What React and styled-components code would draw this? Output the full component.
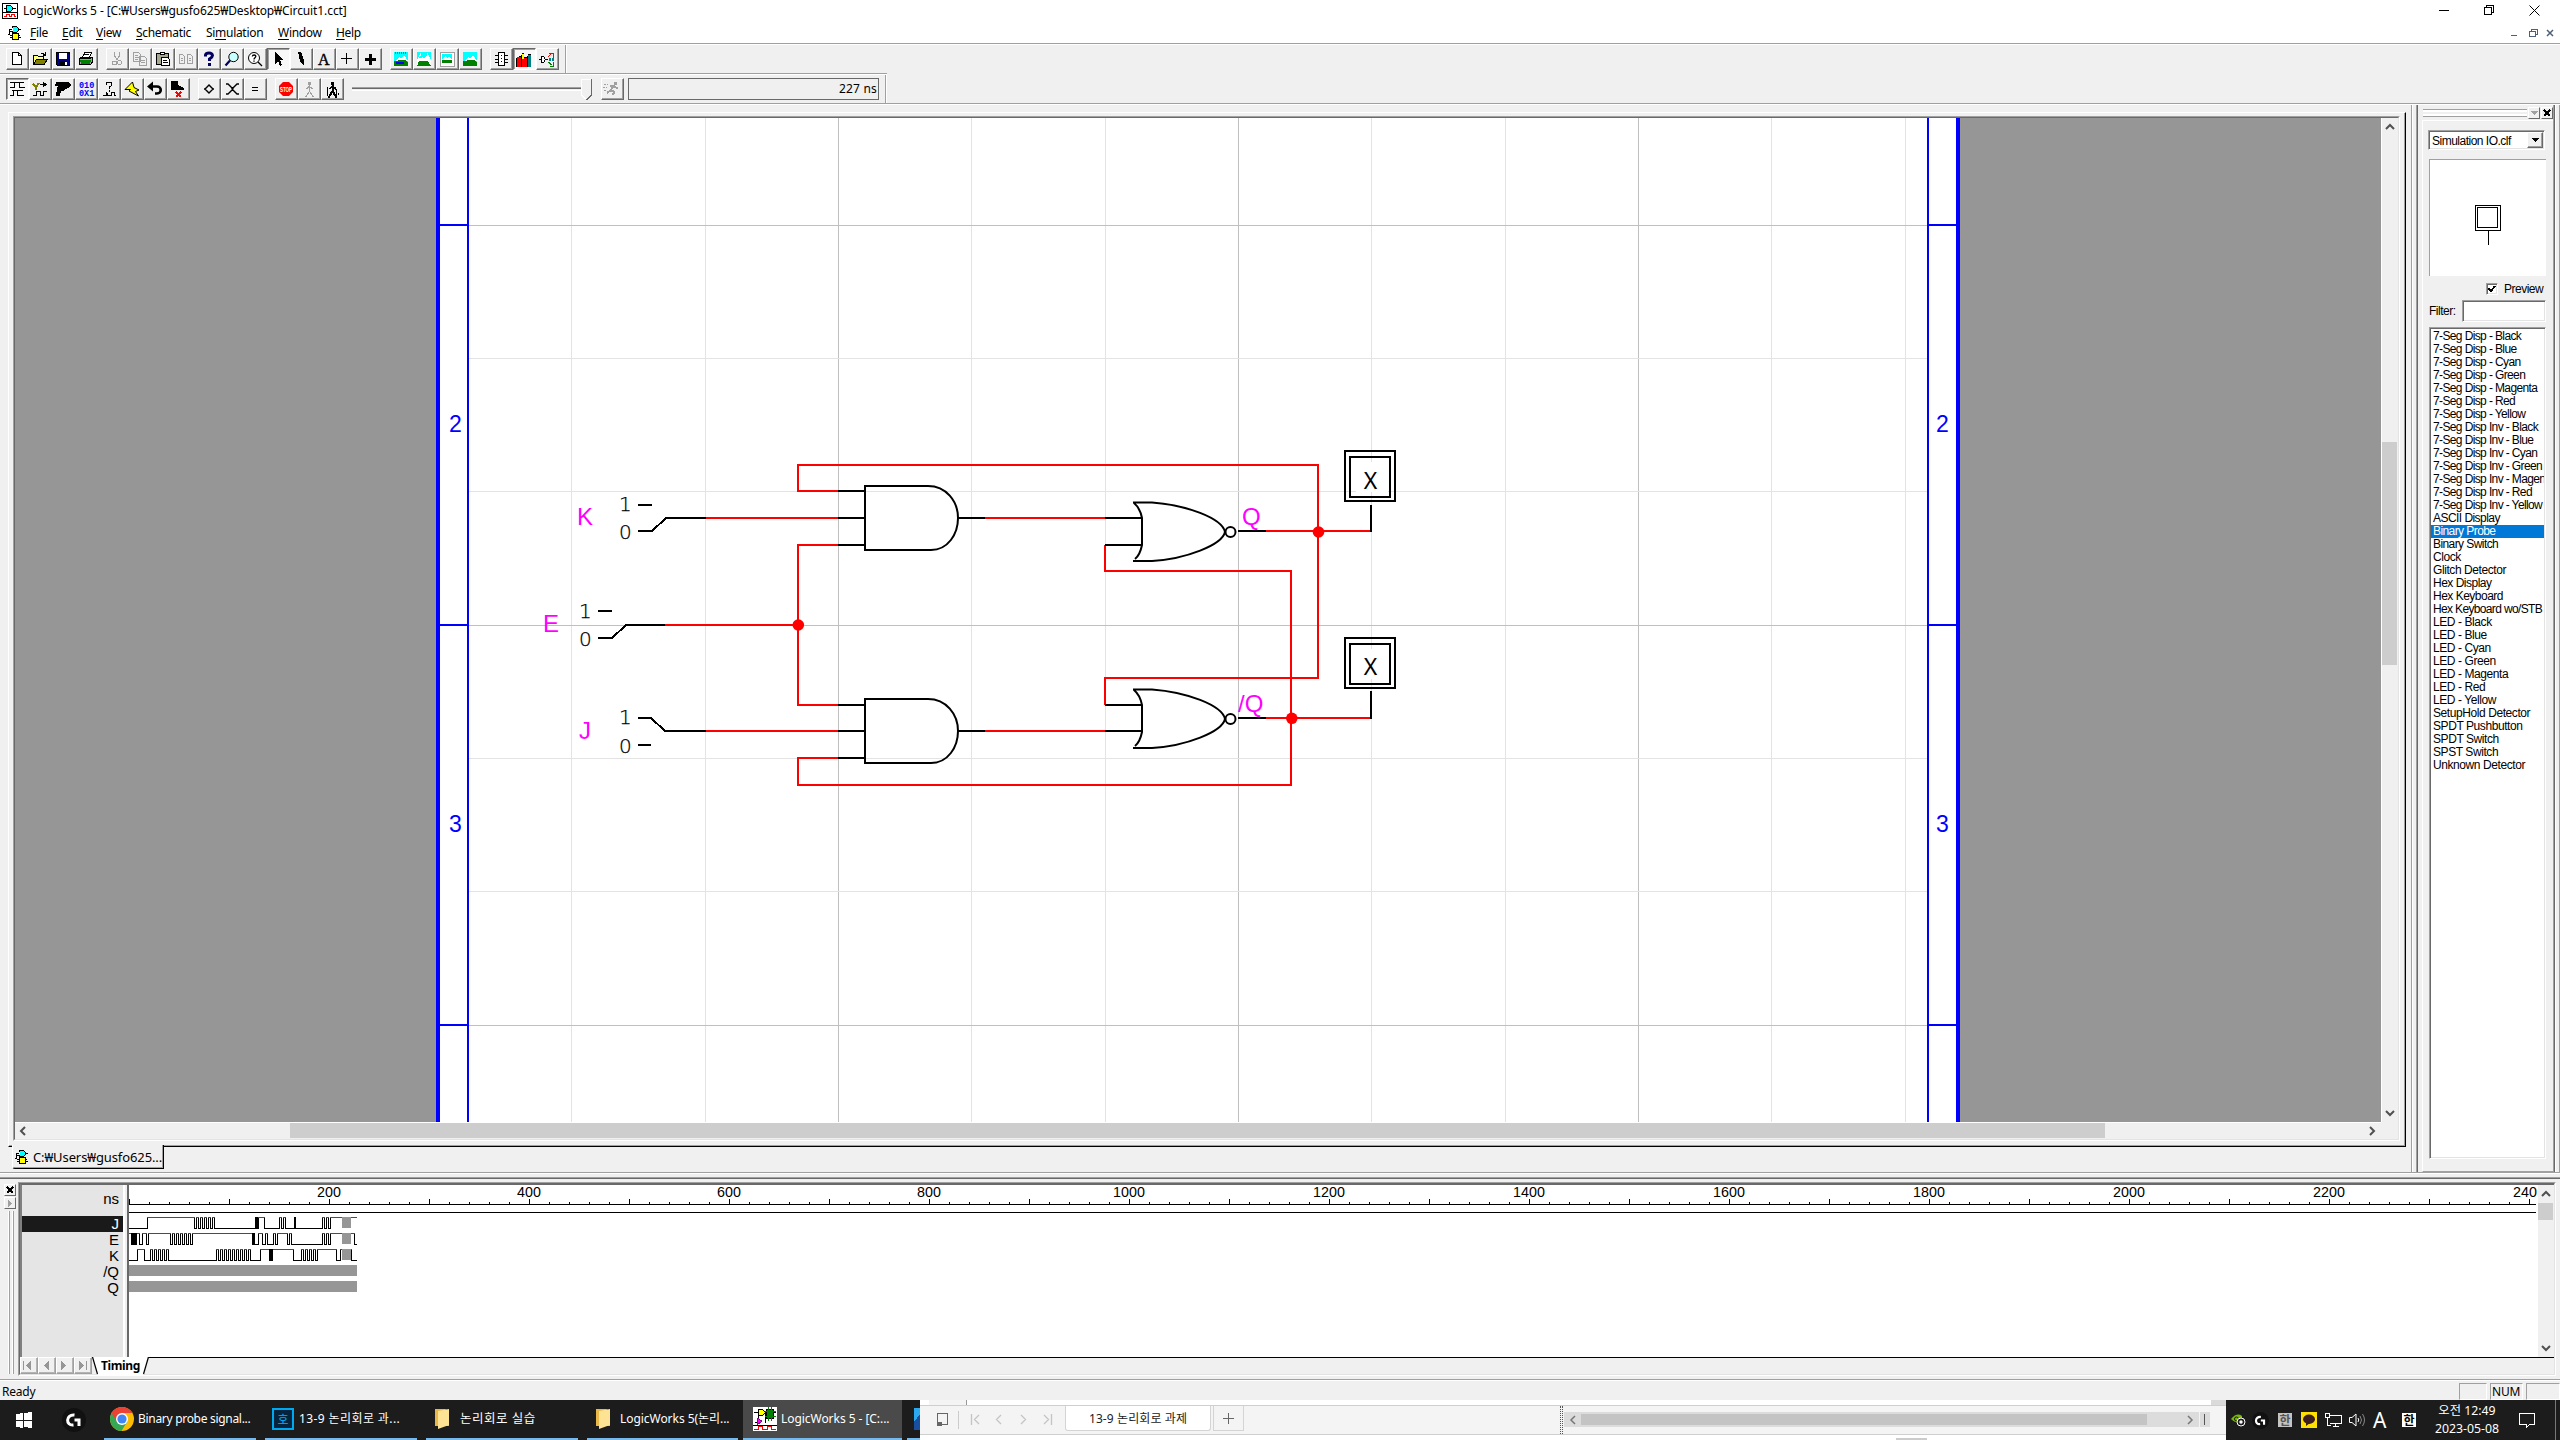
import React from 'react';
import styled, { createGlobalStyle, css } from 'styled-components';

const UI = `"Noto Sans", "Noto Sans CJK KR", sans-serif`;
const GULIM = `"Liberation Sans", "Noto Sans CJK KR", sans-serif`;

const Global = createGlobalStyle`
  *{box-sizing:border-box}
  html,body{margin:0;padding:0;background:#f0f0f0;overflow:hidden}
  svg{display:block;flex:none}
`;

const Screen = styled.div`
  width:2560px;height:1440px;display:flex;flex-direction:column;
  background:#f0f0f0;color:#000;font:12px/16px ${UI};overflow:hidden;white-space:nowrap;
`;
const T = styled.span`
  letter-spacing:${p => p.$ls || 0}px;
  font-size:${p => p.$s || 12}px;
`;

/* ---------- title and menu ---------- */
const TitleBar = styled.header`
  height:23px;flex:none;background:#fff;display:flex;align-items:center;padding:0 20px 2px 2px;
`;
const TitleText = styled(T)`margin-left:5px;flex:1;`;
const WinControls = styled.div`display:flex;gap:34px;align-items:center;`;
const MenuBar = styled.nav`
  height:20px;flex:none;background:#fff;display:flex;align-items:center;padding:0 1px 0 8px;
`;
const MenuItems = styled.div`display:flex;flex:1;margin-left:8px;gap:14px;`;
const MenuItem = styled.span`
  width:${p => p.$w}px;letter-spacing:${p => p.$ls}px;font-size:12px;
  u{text-underline-offset:2px;text-decoration-thickness:1px}
`;
const ChildControls = styled.div`display:flex;`;

/* ---------- toolbars ---------- */
const Toolbar = styled.div`
  height:30px;flex:none;width:${p => p.$w}px;border-top:1px solid #a0a0a0;box-shadow:inset 0 1px #fff;
  display:flex;align-items:flex-start;padding:4px 0 0 6px;gap:8px;
`;
const Group = styled.div`display:flex;`;
const ToolButton = styled.div`
  width:23px;height:22px;display:flex;align-items:center;justify-content:center;padding:0 ${p => p.$pad ?? 1}px 1px 0;
  border:1px solid;border-color:#fff #696969 #696969 #fff;box-shadow:inset -1px -1px #a0a0a0;
  ${p => p.$on && css`background:#f8f8f8;border-color:#696969 #fff #fff #696969;box-shadow:inset 1px 1px #a0a0a0;`}
  svg{overflow:visible}
`;
const ToolbarEnd = styled.div`width:2px;height:28px;border-left:1px solid #a0a0a0;border-right:1px solid #fff;margin:${p => p.$m};`;
const Slider = styled.div`display:flex;align-items:center;width:241px;height:22px;`;
const Track = styled.div`flex:1;height:4px;border-top:1px solid #a0a0a0;border-bottom:1px solid #fff;background:linear-gradient(#696969 1px,#f0f0f0 1px);`;
const TimeField = styled.div`
  width:251px;height:22px;border:1px solid #696969;text-align:right;padding:2px 1px 0 0;
  font:12px/16px ${UI};margin-left:-4px;letter-spacing:.2px;
`;
const Rule = styled.div`height:2px;flex:none;border-top:1px solid #a0a0a0;background:#fff;`;

/* ---------- main area ---------- */
const Main = styled.main`height:1067px;flex:none;display:flex;`;
const Mdi = styled.section`width:2411px;padding:7px 0 0 8px;`;
const Raised = styled.div`
  width:2398px;height:1035px;border-top:1px solid #fff;border-left:1px solid #fff;
  border-right:1px solid #000;border-bottom:1px solid #000;box-shadow:inset -1px -1px #a0a0a0;
  padding:3px 5px 5px 4px;
`;
const Sunken = styled.div`
  height:100%;border:1px solid;border-color:#a0a0a0 #fff #fff #a0a0a0;
`;
const SunkenInner = styled.div`
  height:100%;border:1px solid;border-color:#696969 #e3e3e3 #e3e3e3 #696969;
  display:grid;grid-template-columns:2366px 17px;grid-template-rows:1004px 17px;
`;
const VBar = styled.div`
  background:#f0f0f0;display:flex;flex-direction:column;align-items:center;padding:5px 1px 5px 0;
  border-left:1px solid #fff;
`;
const HBar = styled.div`
  background:#f0f0f0;display:flex;align-items:center;padding:0 5px 1px 4px;border-top:1px solid #fff;
`;
const VThumb = styled.div`width:15px;height:${p => p.$h}px;margin:${p => p.$t}px 0 auto;background:#cdcdcd;`;
const HThumb = styled.div`height:15px;width:${p => p.$w}px;margin:0 auto 0 ${p => p.$l}px;background:#cdcdcd;`;
const DocTab = styled.div`
  position:relative;width:152px;height:24px;margin:-2px 0 0 4px;background:#f0f0f0;
  border-left:1px solid #fff;border-right:1px solid #000;border-bottom:1px solid #000;
  box-shadow:inset -1px -1px #a0a0a0;border-radius:0 0 0 3px;display:flex;align-items:center;padding:0 0 0 2px;
`;
const DocTitle = styled(T)`margin-left:4px;`;

/* ---------- parts dock ---------- */
const Dock = styled.aside`
  width:149px;display:flex;border-left:1px solid #a0a0a0;box-shadow:inset 1px 0 #fff;padding-left:4px;
`;
const DockBody = styled.div`
  width:139px;border-left:1px solid #a0a0a0;border-right:1px solid #696969;
  box-shadow:inset 1px 0 #696969,inset -1px 0 #a0a0a0;padding:1px 1px 0 6px;
`;
const DockEdge = styled.div`width:5px;border-right:1px solid #a0a0a0;border-left:1px solid #fff;`;
const DockHead = styled.div`height:14px;display:flex;align-items:center;gap:1px;`;
const Grip = styled.div`
  flex:1;height:8px;border-top:1px solid #a0a0a0;border-bottom:1px solid #a0a0a0;
  background:linear-gradient(#fff 2px,#f0f0f0 2px,#f0f0f0 4px,#fff 4px);
`;
const TinyButton = styled.div`
  width:12px;height:12px;flex:none;border:1px solid;border-color:#fff #696969 #696969 #fff;
  display:flex;align-items:center;justify-content:center;
`;
const DockPane = styled.div`
  height:1052px;border-top:1px solid #fff;border-left:1px solid #fff;border-bottom:1px solid #a0a0a0;
  padding:9px 0 0 5px;margin-left:-1px;
`;
const field = css`border:1px solid;border-color:#a0a0a0 #fff #fff #a0a0a0;box-shadow:inset 1px 1px #696969,inset -1px -1px #e3e3e3;background:#fff;`;
const Combo = styled.div`${field}width:117px;height:20px;display:flex;align-items:center;padding:1px 1px 1px 3px;font:12px/16px ${GULIM};`;
const ComboText = styled.span`flex:1;letter-spacing:-.5px;padding-top:1px;`;
const ComboButton = styled.div`
  width:16px;height:16px;background:#f0f0f0;border:1px solid;border-color:#fff #696969 #696969 #fff;
  box-shadow:inset -1px -1px #a0a0a0;display:flex;align-items:center;justify-content:center;
`;
const Preview = styled.div`
  width:117px;height:117px;margin:9px 0 0 1px;background:#fff;border-top:1px solid #a0a0a0;border-left:1px solid #a0a0a0;
  padding:45px 0 0 45px;
`;
const CheckRow = styled.div`display:flex;align-items:center;height:14px;margin-top:6px;padding-left:58px;font:12px/14px ${GULIM};letter-spacing:-.5px;gap:6px;`;
const Check = styled.div`${field}width:12px;height:12px;display:flex;align-items:center;justify-content:center;`;
const FilterRow = styled.div`display:flex;align-items:center;justify-content:space-between;width:118px;height:22px;margin-top:4px;padding-left:1px;font:12px/14px ${GULIM};letter-spacing:-.5px;`;
const FilterInput = styled.div`${field}width:84px;height:22px;`;
const List = styled.div`${field}width:117px;height:832px;margin:5px 0 0 1px;padding:2px 1px 1px;overflow:hidden;`;
const ListItem = styled.div`
  height:13px;font:12px/13px ${GULIM};letter-spacing:${p => p.$ls}px;padding-left:2px;overflow:hidden;
  ${p => p.$sel && css`background:#0078d7;color:#fff;`}
`;

/* ---------- timing ---------- */
const Timing = styled.section`height:207px;flex:none;border-top:1px solid #a0a0a0;box-shadow:inset 0 1px #fff;padding-top:4px;`;
const TimingTop = styled.div`height:2px;background:linear-gradient(#a0a0a0 1px,#696969 1px);`;
const TimingRow = styled.div`display:flex;height:197px;padding-top:3px;`;
const Side = styled.div`width:18px;padding:2px 0 0 4px;display:flex;flex-direction:column;gap:1px;`;
const SideGrip = styled.div`
  width:6px;height:163px;margin:1px 0 0 4px;border-left:1px solid #fff;border-right:1px solid #a0a0a0;
  background:linear-gradient(90deg,#a0a0a0 1px,#f0f0f0 1px,#f0f0f0 3px,#fff 3px);
`;
const TimingFrame = styled.div`
  width:2538px;height:194px;border:1px solid;border-color:#a0a0a0 #fff #fff #a0a0a0;
`;
const TimingInner = styled.div`
  height:100%;border:1px solid;border-color:#696969 #e3e3e3 #e3e3e3 #696969;
  display:grid;grid-template-rows:173px 1fr;
`;
const TimingPanes = styled.div`display:flex;border-top:1px solid #696969;border-left:2px solid #808080;`;
const Names = styled.div`width:101px;background:#e5e5e5;font:14px/16px "Liberation Sans",sans-serif;text-align:right;`;
const Unit = styled.div`height:31px;padding:6px 4px 0 0;font-size:15px;`;
const Name = styled.div`height:16px;line-height:15px;padding-right:4px;font-size:15px;${p => p.$sel && css`background:#1a1a1a;color:#fff;`}`;
const Splitter = styled.div`width:6px;background:linear-gradient(90deg,#fff 2px,#f0f0f0 2px,#f0f0f0 4px,#696969 4px);`;
const Waves = styled.div`flex:1;background:#fff;`;
const TabsRow = styled.div`display:flex;align-items:flex-start;`;
const NavButton = styled.div`
  width:18px;height:17px;border:1px solid;border-color:#fff #a0a0a0 #a0a0a0 #fff;box-shadow:inset -1px -1px #b4b4b4;
  display:flex;align-items:center;justify-content:center;padding-right:2px;
`;
const ActiveTab = styled.div`display:flex;height:18px;`;
const TabLabel = styled.div`
  width:45px;height:18px;background:#fff;font:bold 12px/18px ${UI};text-align:center;letter-spacing:-.4px;
`;
const TabLine = styled.div`flex:1;height:1px;background:#000;`;

/* ---------- status ---------- */
const Status = styled.footer`height:21px;flex:none;border-top:1px solid #a0a0a0;box-shadow:inset 0 1px #fff;display:flex;align-items:center;padding:3px 0 0 2px;`;
const StatusText = styled(T)`flex:1;`;
const Cell = styled.div`
  width:${p => p.$w}px;height:17px;margin-left:3px;border:1px solid;border-color:#a0a0a0 #fff #fff #a0a0a0;
  padding-left:1px;line-height:16px;letter-spacing:-.2px;
`;

/* ---------- taskbar ---------- */
const Taskbar = styled.div`height:40px;flex:none;background:#1c1c1c;display:flex;color:#fff;overflow:hidden;`;
const Launch = styled.div`width:${p => p.$w}px;height:40px;padding-left:${p => p.$l}px;display:flex;align-items:center;`;
const Task = styled.div`
  width:${p => p.$w || 152}px;margin-right:${p => p.$mr ?? 9}px;height:40px;padding:0 0 0 ${p => p.$l}px;
  display:flex;align-items:center;gap:${p => p.$g}px;border-bottom:2px solid #76b9ed;background:${p => (p.$on ? '#4a4a4a' : 'transparent')};
  overflow:hidden;
`;
const Sheet = styled.div`width:1306px;height:40px;background:#fff;color:#333;display:flex;flex-direction:column;`;
const SheetTop = styled.div`height:5px;display:flex;justify-content:space-between;`;
const SheetHead = styled.div`width:38px;margin-left:9px;height:5px;background:#f4f4f4;border-right:1px solid #999;`;
const SheetCorner = styled.div`width:15px;height:5px;background:#dadada;`;
const SheetBar = styled.div`height:30px;background:#f4f4f4;border-top:1px solid #cfcfcf;border-bottom:1px solid #cfcfcf;display:flex;align-items:flex-start;`;
const SheetNav = styled.div`width:145px;height:28px;display:flex;align-items:center;`;
const SheetTab = styled.div`
  width:146px;height:25px;background:#fff;border:1px solid #d4d4d4;border-top:0;border-radius:0 0 3px 3px;
  text-align:center;line-height:26px;font-size:12px;letter-spacing:.1px;color:#222;
`;
const SheetAdd = styled.div`width:31px;height:25px;margin-left:2px;border:1px solid #d4d4d4;border-top:0;display:flex;align-items:center;justify-content:center;`;
const SheetSplit = styled.div`width:3px;height:28px;margin-left:316px;border-left:1px dotted #555;border-right:1px dotted #555;`;
const SheetScroll = styled.div`width:635px;height:15px;margin:6px 1px 0 1px;background:#dcdcdc;display:flex;align-items:center;padding:0 5px;justify-content:space-between;`;
const SheetThumb = styled.div`width:566px;height:11px;margin-right:auto;margin-left:4px;background:#c4c4c4;`;
const SheetGrab = styled.div`width:10px;height:15px;margin-top:6px;background:#dcdcdc;padding:2px 0 0 4px;`;
const SheetFoot = styled.div`width:31px;height:2px;margin:3px 0 0 976px;background:#ccc;`;
const Tray = styled.div`flex:1;display:flex;align-items:center;padding-left:5px;`;
const TrayItem = styled.div`width:${p => p.$w}px;display:flex;flex:none;`;
const Ime = styled.div`
  width:14px;height:14px;font:bold 12px/13px "Noto Sans CJK KR",sans-serif;text-align:center;
  background:${p => p.$bg};color:${p => p.$c};
`;
const Letter = styled.div`font:21px/22px ${UI};margin:-1px 0 0 -1px;`;
const Clock = styled.div`width:84px;text-align:center;font:12.3px/18px ${UI};`;
const ShowDesktop = styled.div`width:5px;height:40px;margin-left:auto;border-left:1px solid #777;`;

/* ---------- icons ---------- */
const I = ({ w = 16, h = 16, vb, children, smooth }) => (
  <svg width={w} height={h} viewBox={vb || `0 0 ${w} ${h}`} fill="none" stroke="#000"
    shapeRendering={smooth ? 'auto' : 'crispEdges'}>{children}</svg>
);
const Chevron = ({ d, c = '#505050', s = 2 }) => {
  const p = { up: 'M1 6L5 2L9 6', down: 'M1 2L5 6L9 2', left: 'M6 1L2 5L6 9', right: 'M2 1L6 5L2 9' }[d];
  const v = d === 'up' || d === 'down';
  return <I smooth w={v ? 10 : 8} h={v ? 8 : 10}><path d={p} stroke={c} strokeWidth={s} /></I>;
};

const GateIcon = () => (
  <I w={14} h={14}>
    <path d="M5 1h4v1h1v3h-1v1h-4z" fill="#00ffff" stroke="none" />
    <path d="M4 .5h5M4 6.500h5M9 1.500h1M9 5.500h1M11 3.500h2M10.500 2v3M4.500 1v1M4.500 5v1" />
    <path d="M5 8h5v5h-5z" fill="#ffff00" stroke="none" />
    <path d="M4.500 7v7M4 7.500h7M4 13.500h7M10.500 7v7M11 11.500h2M11 9.500h1M1 3.500h3M0 8.500h2M2 5.500h2M1.500 4v4M2 11.500h2M2 9.500h2" />
  </I>
);
const AppIcon = () => (
  <I w={16} h={16}>
    <path d="M.5.5h15v15H.5z" fill="#fff" /><path d="M1 9.500h14" />
    <path d="M2 5.500h3M11 5.500h3" /><path d="M5 3h4l2 1v3l-2 1h-4z" fill="#00ffff" stroke="none" /><path d="M4.500 2v7M5 2.500h4M5 8.500h4M9.500 3v1M10.500 4v3M9.500 7v1" />
    <path d="M2 13.500h2v-2h3v2h2v-2h3v2h2" stroke="#f00" />
  </I>
);

const NewI = () => <I><path d="M3.500 1.500h6l3 3v9h-9zM9.500 1.500v3h3" fill="#fff" /></I>;
const OpenI = () => <I><path d="M1.500 13.500v-9h4l1 1h5v3" fill="#ffff80" /><path d="M1.500 13.500l3-5h11l-3.500 5z" fill="#808000" /><path d="M9 2.500h2l2 1.500M13.500 1v3.500h-3" /></I>;
const SaveI = () => <I><path d="M1.500 1.500h13v13h-12l-1-1z" fill="#000080" /><path d="M4 2h8v6H4z" fill="#fff" stroke="none" /><path d="M4.500 10.500h7v4h-7z" fill="#000" /><path d="M10 11h1.500v3H10z" fill="#fff" stroke="none" /></I>;
const PrintI = () => <I><path d="M4.500 6.500l2-5h7l-2 5z" fill="#fff" /><path d="M1.500 7.500l2-1.500h11v5l-2 2.500h-11z" fill="#a0a0a0" /><path d="M2 9.500h11M3 12h9" stroke="#008000" strokeWidth="2" /><path d="M1.500 13.500h11M1.500 8v5.500M6 3.500h5M1 7.500h12" /></I>;
const CutI = () => <I><path d="M5.500 1v4l3 4M10.500 1v4l-3 4" stroke="#a0a0a0" /><circle cx="5.500" cy="12" r="2" stroke="#a0a0a0" /><circle cx="10.500" cy="11.500" r="2" stroke="#a0a0a0" /></I>;
const CopyI = () => <I><path d="M1.500 1.500h5l2 2v7h-7zM7.500 5.500h5l2 2v7h-7zM3 4.500h3M3 6.500h4M3 8.500h3M9 9.500h4M9 11.500h4" stroke="#a0a0a0" /></I>;
const PasteI = () => <I><path d="M1.500 2.500h12v11h-12z" fill="#a8a890" /><path d="M5 3.500V1.500h4v2z" fill="#fff" /><path d="M6.500 6.500h6l2 2v6h-8z" fill="#fff" /><path d="M8 9.500h4M8 11.500h5" /></I>;
const BookI = () => <I><path d="M1.500 3.500h3l2 2v7h-5zM9.500 3.500h3l2 2v7h-5zM3 7.500h2M3 9.500h2M11 7.500h2M11 9.500h2" stroke="#a0a0a0" /></I>;
const HelpI = () => <I smooth><path d="M4.500 5.500V4Q5 2 8 2T11.500 4.500Q11.500 6 8.500 8V10M8.500 12v3" stroke="#000060" strokeWidth="3" /></I>;
const LensI = () => <I smooth><circle cx="9.500" cy="6" r="4.700" fill="#c8ffff" /><path d="M6 9.500L1.500 14.500" stroke="#000060" strokeWidth="2.200" /></I>;
const LensQI = () => <I smooth><circle cx="7" cy="7" r="5.500" fill="#fff" /><path d="M11 11l4 4M5.300 5.500C5.500 3.500 9 3.500 8.800 5.500C8.700 6.800 7 6.800 7 8.500M7 9.500v1.300" strokeWidth="1.300" /></I>;
const ArrowI = () => <I><path d="M5 1v12l3-3 2 5 2-1-2-5h4z" fill="#000" stroke="none" /></I>;
const PenI = () => <I><path d="M5 1h3l3 8v6l-4-5z" fill="#000" stroke="none" /></I>;
const AI = () => <I><text x="2" y="14" fontFamily="Liberation Serif, serif" fontSize="16" fill="#000" stroke="#000" strokeWidth=".4">A</text></I>;
const PlusI = () => <I><path d="M7.500 2v11M2 7.500h11" /></I>;
const BoldPlusI = () => <I><path d="M8 3v11M3 8.500h11" strokeWidth="3" /></I>;
const Scene = ({ k }) => (
  <I>
    <path d="M1 1h14v14H1z" fill={k === 2 ? '#fff' : '#00ffff'} stroke={k === 2 ? '#a0a0a0' : 'none'} />
    {k === 2 && <path d="M3 3h10v6H3z" fill="#00ffff" stroke="none" />}
    {k === 1 && <path d="M1 15V9L5 1h6l4 8v6z" fill="#fff" stroke="none" />}
    {k === 1 && <path d="M5 1h6v3l2 3H3l2-3z" fill="#00ffff" stroke="none" />}
    <path d={k === 2 ? 'M3 9l3-4 2 2 2-2 3 4z' : 'M2 10l4-4 2 2 3-4 4 6z'} fill="#fff" stroke="none" />
    <path d={k === 2 ? 'M3 9h10v3H3z' : k === 1 ? 'M3 10h9l3 5H1z' : 'M1 10h3l1-1h7l3 2v4H1z'} fill="#008000" stroke="none" />
    {k === 0 && <path d="M3 12h8" stroke="#0000ff" strokeWidth="2" />}
    {k === 0 && <path d="M2 2h12" stroke="#408080" strokeDasharray="1 1" strokeWidth="2" />}
  </I>
);
const ChipI = () => <I><path d="M5.500 1.500h6v13h-6z" fill="#fff" /><path d="M2 4.500h3M2 8h3M2 11.500h3M12 4.500h3M12 8h3M12 11.500h3M7 1.500h3" /><path d="M8.500 4v8" strokeDasharray="1 2" /></I>;
const BooksI = () => <I><path d="M1 6h4v10h-4zM8 7h3v9h-3z" fill="#ff0000" stroke="none" /><path d="M6 3h2v5h-2z" fill="#ffff00" stroke="none" /><path d="M6 8h2v8h-2z" fill="#ff0000" stroke="none" /><path d="M12 4h3v12h-3z" fill="#008080" stroke="none" /><path d="M.5 7v9M5.500 4v12M11.500 5v11M6 2.500h2M12 3.500h3M3 5.500h2M8 6.500h3" /></I>;
const NetI = () => <I><path d="M0 8.500h2M7 8.500h2" /><path d="M2.500 5.500h2l2 3-2 3h-2z" fill="#fff" /><path d="M9 6l4-4M10 2.500h4v4" stroke="#f00" /><path d="M10 8.500h5" stroke="#008080" strokeWidth="3" strokeDasharray="2 1" /><path d="M9 11l4 3M14.500 11v4h-4" stroke="#008000" /></I>;

const WaveI = () => <I><path d="M1 1.500h14M1 6.500h4v-5M10.500 1.500v5h5M3 9.500h5v5h7M1 14.500h3v-5M8 9.500h6" /></I>;
const PlugI = () => <I><path d="M1 3l3 3M7 2L4 6v3" stroke="#808000" strokeWidth="2" /><path d="M8 3.500h3M11.500 1v5M12 3.500h3M12 2.500h2M12 4.500h2M1 14.500h3v-4h4v4h3v-4h4" /></I>;
const GunI = () => <I><path d="M0 3h1V1h13l2 3-2 3-4 1-2 2H6l-1 5H1l1-7 1-3H0z" fill="#000" stroke="none" /></I>;
const BitsI = () => <I><g fill="#0000ff" stroke="none" fontFamily="Liberation Mono, monospace" fontSize="8.500" fontWeight="bold"><text x="1" y="7">010</text><text x="1" y="15">0X1</text></g></I>;
const QWaveI = () => <I><path d="M5.500 4V1.500h5v3L8.500 6v2M8.500 9v1.500M2 14.500h3v-3M5 11.500h1M6 14.500v-3M6 14.500h4v-3h3v3h2" /></I>;
const ZapI = () => <I smooth><path d="M8.500 1L1 8.500H6.500L5 10L14.500 15L11.500 10.500L15 9L10 6.500Z" fill="#ffff00" /></I>;
const UndoI = () => <I smooth><path d="M5 5.500h5c5 0 5 7 0 7H8" strokeWidth="2.600" /><path d="M0 5.500L6 .5v10z" fill="#000" stroke="none" /></I>;
const BootI = () => <I><path d="M1 0h7v4l6 3v2H1z" fill="#000" stroke="none" /><path d="M6 11l5 5M11 11l-5 5" stroke="#f00" strokeWidth="1.500" /></I>;
const DiamondI = () => <I smooth><path d="M3 8h1l4-4 4 4h1M4 8l4 4 4-4" strokeWidth="1.400" /></I>;
const CrossI = () => <I smooth><path d="M2 3h2l5 5-5 5H2M15 3h-2L8 8l5 5h2" strokeWidth="1.400" /></I>;
const EqI = () => <I><path d="M5 6.500h6M5 9.500h6" /></I>;
const StopI = () => <I smooth><path d="M5 1h6l4 4v6l-4 4H5l-4-4V5z" fill="#f00" stroke="none" /><text x="2" y="10.800" fontSize="7" fontWeight="bold" textLength="12" lengthAdjust="spacingAndGlyphs" fill="#fff" stroke="none" fontFamily="Liberation Sans, sans-serif">STOP</text></I>;
const Walker = ({ c, n }) => <I><path d="M7 1h3v3H7z" fill={c} stroke="none" /><path d="M8.500 4v6M8.500 5l-3 3M9 6l3 2M8.500 10l-3 5M8.500 10l3 5M4 15.500h2M11 15.500h2" stroke={c} strokeWidth={n ? 2 : 1} />{n && <path d="M3.500 6v9M14 12v2M12.500 8v7" />}</I>;
const RunI = () => <I><path d="M1 3.500h4M0 6.500h4M1 9.500h3" stroke="#a0a0a0" strokeDasharray="2 1" /><path d="M11 1h3v3h-3z" fill="#a0a0a0" stroke="none" /><path d="M11 4L8 9l3 2-1 3M8 9l-4 3M10 5L7 5M11 6l4 1" stroke="#a0a0a0" strokeWidth="2" /></I>;

/* ---------- schematic ---------- */
const RowMarks = [225, 625, 1025];
const Schematic = () => {
  const v = [571, 705, 838, 971, 1105, 1238, 1371, 1505, 1638, 1771, 1905];
  const h = [225, 358, 491, 625, 758, 891, 1025];
  return (
    <svg width="2366" height="1004" viewBox="15 118 2366 1004" fill="none" shapeRendering="crispEdges">
      <rect x="15" y="118" width="2366" height="1004" fill="#969696" />
      <rect x="437" y="118" width="1522" height="1004" fill="#fff" />
      {v.map((x, i) => <path key={x} d={`M${x + .5} 118V1122`} stroke={i % 3 === 2 ? '#c0c0c0' : '#e3e3e3'} />)}
      {h.map((y, i) => <path key={y} d={`M469 ${y + .5}H1928`} stroke={i % 3 === 0 ? '#c0c0c0' : '#e3e3e3'} />)}
      <g stroke="#0000ff" strokeWidth="2">
        <path d="M468 118V1122M1928 118V1122" />
        <path d="M438 118V1122M1958 118V1122" strokeWidth="4" />
        {RowMarks.map(y => <path key={y} d={`M438 ${y}H468M1928 ${y}H1958`} />)}
      </g>
      <g fill="#0000ff" fontFamily="Liberation Sans, sans-serif" fontSize="23" textAnchor="middle">
        <text x="455.500" y="432">2</text><text x="1942.500" y="432">2</text>
        <text x="455.500" y="832">3</text><text x="1942.500" y="832">3</text>
      </g>
      <g stroke="#ff0000" strokeWidth="2">
        <path d="M838 491H798V465H1318V678H1105V705" />
        <path d="M706 518H838M985 518H1105M838 545H798V705H838M665 625H798" />
        <path d="M706 731H838M985 731H1105M838 758H798V785H1291V571H1105V545" />
        <path d="M1266 531H1371M1266 718H1371" />
      </g>
      <g fill="#ff0000" shapeRendering="auto">
        <circle cx="798.300" cy="625" r="5.800" /><circle cx="1318.500" cy="532" r="5.800" /><circle cx="1291.800" cy="718.300" r="5.800" />
      </g>
      <g stroke="#000" strokeWidth="2">
        <path d="M638 505H652M638 531H652L666 518H706" />
        <path d="M598 611H612M598 638H612L626 625H665" />
        <path d="M638 745H651M638 718H651L665 731H706" />
        {[0, 213].map(o => (
          <g key={o} transform={`translate(0 ${o})`}>
            <path d={`M838 ${o ? 492 : 491}H865M838 518H865M838 545H865M958 518H985`} />
            <path shapeRendering="auto" d="M865 486H928C946 486 958 501 958 518C958 534 948 550 931 550H865Z" />
          </g>
        ))}
        {[0, 187].map(o => (
          <g key={o} transform={`translate(0 ${o})`}>
            <path d={`M1105 518H1142M1105 ${o ? 544 : 545}H1142M1238 531H1266M1371 ${o ? 504 : 505}V532`} />
            <path shapeRendering="auto" d="M1133 502.500H1152C1186 505 1222 518 1225 532C1222 545 1186 559 1152 561H1133M1134 503Q1140 508 1142 518V545Q1140 555 1135 559" />
            <circle shapeRendering="auto" cx="1230.500" cy="532" r="5" />
            <path d="M1345 451H1395V501H1345ZM1350 457H1390V497H1350Z" />
            <rect x="1356" y="462" width="32" height="30" fill="#fff" stroke="none" />
          </g>
        ))}
      </g>
      <g fill="#ff00ff" fontFamily="Liberation Sans, sans-serif" fontSize="24">
        <text x="577" y="525">K</text><text x="543" y="632">E</text><text x="579" y="739">J</text>
        <text x="1242" y="525">Q</text><text x="1238" y="712">/Q</text>
      </g>
      <g fill="#000" stroke="#000" strokeWidth=".25" fontFamily="DejaVu Sans, sans-serif" fontWeight="200" fontSize="20">
        <text x="619" y="511">1</text><text x="619" y="539">0</text>
        <text x="579" y="618">1</text><text x="579" y="646">0</text>
        <text x="619" y="724">1</text><text x="619" y="753">0</text>
      </g>
      <g fill="#000" fontFamily="Noto Sans, sans-serif" fontSize="23" textAnchor="middle">
        <text x="1370.500" y="489">X</text><text x="1370.500" y="675">X</text>
      </g>
    </svg>
  );
};

/* ---------- waveforms ---------- */
const pulses = (a, b) => Array.from({ length: (b - a) / 2 + 1 }, (_, i) => a + 2 * i);
const signals = [
  { y: 1217, start: 0, end: 356, t: [147, ...pulses(194, 214), 258, 264, ...pulses(279, 285), ...pulses(322, 330)], solid: [[255, 3], [294, 2]] },
  { y: 1233, start: 1, end: 356, t: [139, 142, 146, 148, ...pulses(170, 192), 252, 258, 262, 265, 267, 273, 275, 277, 287, 289, 291, ...pulses(322, 330), 354], solid: [[131, 6], [252, 3]] },
  { y: 1249, start: 0, end: 356, t: [137, 144, ...pulses(150, 168), ...pulses(216, 250), 260, 293, ...pulses(301, 317), 336, 340, 351], solid: [[269, 4]] },
];
const Wave = ({ s }) => {
  let x = 129, lv = s.start, hi = '', lo = '', ve = '';
  [...s.t, s.end].forEach((t, i, a) => {
    const y = s.y + (lv ? 0.5 : 11.5);
    if (lv) hi += `M${x} ${y}H${t + 1}`; else lo += `M${x} ${y}H${t + 1}`;
    if (i < a.length - 1) ve += `M${t + .5} ${s.y + 1}V${s.y + 12}`;
    x = t; lv = 1 - lv;
  });
  return (
    <g>
      <path d={lo + ve} stroke="#000" /><path d={hi} stroke="#ff0000" />
      {s.solid.map(([a, w]) => <rect key={a} x={a} y={s.y} width={w} height="12" fill="#000" />)}
      <rect x="342" y={s.y} width="9" height="11" fill="#969696" />
    </g>
  );
};
const WaveChart = () => (
  <svg width="2408" height="170" viewBox="129 1185 2408 170" fill="none" shapeRendering="crispEdges">
    <path d="M129 1204.500H2536M129 1212.500H2536" stroke="#000" />
    {Array.from({ length: 121 }, (_, i) => (
      <path key={i} d={`M${129.5 + i * 20} ${i % 5 ? 1202 : 1199}V1204`} stroke="#000" />
    ))}
    <g fill="#000" fontFamily="Liberation Sans, sans-serif" fontSize="14.300" textAnchor="middle">
      {Array.from({ length: 12 }, (_, i) => <text key={i} x={329 + i * 200} y="1197">{(i + 1) * 200}</text>)}
    </g>
    {signals.map(s => <Wave key={s.y} s={s} />)}
    <path d="M129 1265h228v11h-228zM129 1281h228v11h-228z" fill="#969696" />
  </svg>
);

/* ---------- taskbar icons ---------- */
const WinLogo = () => <I w={16} h={16}><path d="M0 2l7-1v7H0zM8 1l8-1v8H8zM0 9h7v7l-7-1zM8 9h8v7l-8-1z" fill="#fff" stroke="none" /></I>;
const GLogo = ({ s = 24 }) => <I smooth w={s} h={s} vb="0 0 24 24"><circle cx="12" cy="12" r="12" fill="#111" stroke="none" /><path d="M12.500 7C3.500 6 3.500 18 11.500 17M12.500 12H17V18" stroke="#fff" strokeWidth="3" /></I>;
const Chrome = () => (
  <I smooth w={24} h={24}><g stroke="none">
    <circle cx="12" cy="12" r="12" fill="#fbbc05" />
    <path d="M1.600 6A12 12 0 0 0 11.500 24L17 15 12 12z" fill="#34a853" />
    <path d="M1.600 6A12 12 0 0 1 22.400 6H12L7 15z" fill="#ea4335" />
    <circle cx="12" cy="12" r="6" fill="#fff" /><circle cx="12" cy="12" r="4.600" fill="#4285f4" />
  </g></I>
);
const HwpBox = styled.div`width:22px;height:22px;border:2px solid #00a8f0;background:#04233c;color:#00b4ff;font:12px/17px "Noto Sans CJK KR",sans-serif;text-align:center;`;
const Folder = () => <I smooth w={15} h={22}><g stroke="none"><path d="M0 1h10l4 2v15H0z" fill="#e8b84a" /><path d="M3 3l11-2v16l-11 4z" fill="#ffe394" /></g></I>;
const LwIcon = () => (
  <I w={24} h={24}><path d="M0 0h24v24H0z" fill="#fff" stroke="none" />
    <path d="M1 5.500h22M5.500 3v14M12.500 4v12M2 15.500h6" /><path d="M5.500 2.500h4l3 3-3 3h-4z" fill="#ff0" /><path d="M13.500 2.500h7v9h-7z" fill="#008000" /><path d="M12 4.500h11M12 9.500h11M15.500 0v14M18.500 0v14" stroke="#008000" />
    <path d="M4 11l5 3-5 4z" fill="#f0f" stroke="#808" /><path d="M0 18.500h24" /><path d="M1 22.500h4v-3h4v3h5v-3h4v3h5" stroke="#f00" /></I>
);

const parts = ['7-Seg Disp - Black', '7-Seg Disp - Blue', '7-Seg Disp - Cyan', '7-Seg Disp - Green', '7-Seg Disp - Magenta', '7-Seg Disp - Red', '7-Seg Disp - Yellow',
  '7-Seg Disp Inv - Black', '7-Seg Disp Inv - Blue', '7-Seg Disp Inv - Cyan', '7-Seg Disp Inv - Green', '7-Seg Disp Inv - Magenta', '7-Seg Disp Inv - Red', '7-Seg Disp Inv - Yellow',
  'ASCII Display', 'Binary Probe', 'Binary Switch', 'Clock', 'Glitch Detector', 'Hex Display', 'Hex Keyboard', 'Hex Keyboard wo/STB',
  'LED - Black', 'LED - Blue', 'LED - Cyan', 'LED - Green', 'LED - Magenta', 'LED - Red', 'LED - Yellow',
  'SetupHold Detector', 'SPDT Pushbutton', 'SPDT Switch', 'SPST Switch', 'Unknown Detector'];
const tightness = [['7-Seg', -0.62], ['Hex Keyboard wo', -0.65], ['Binary', -0.58], ['ASCII', -0.55], ['Hex', -0.5]];
const spacing = name => (tightness.find(([k]) => name.startsWith(k)) || [0, -0.42])[1];
const menus = [['', 'F', 'ile', 18], ['', 'E', 'dit', 20], ['', 'V', 'iew', 26], ['', 'S', 'chematic', 56], ['Si', 'm', 'ulation', 58], ['', 'W', 'indow', 44], ['', 'H', 'elp', 25]];
const Buttons = ({ items, on, pad }) => <Group>{items.map((Icon, i) => <ToolButton key={i} $pad={pad} $on={i === on}><Icon /></ToolButton>)}</Group>;
const scenes = [0, 1, 2, 3].map(k => () => <Scene k={k} />);
const Walking = () => <Walker c="#a0a0a0" />;
const Stepping = () => <Walker c="#000" n />;
const Tri = ({ d, bar, c = '#969696' }) => (
  <I w={10} h={9}><path d={d === 'l' ? 'M8 0v9L3 4.500z' : 'M2 0v9l5-4.500z'} fill={c} stroke="none" />{bar && <path d={d === 'l' ? 'M.5 0v9' : 'M9.500 0v9'} stroke={c} />}</I>
);
const XMark = () => <I w={8} h={8}><path d="M1 1l6 6M7 1L1 7" strokeWidth="1.800" /></I>;

export default function App() {
  return (
    <Screen>
      <Global />
      <TitleBar>
        <AppIcon />
        <TitleText $ls={-0.1}>LogicWorks 5 - [C:₩Users₩gusfo625₩Desktop₩Circuit1.cct]</TitleText>
        <WinControls>
          <I w={11} h={11}><path d="M0 5.500h10" /></I>
          <I w={11} h={11}><path d="M.5 2.500h7v7h-7zM2.500 2.500v-2h7v7h-2" /></I>
          <I w={11} h={11} smooth><path d="M.5.5l10 10M10.500.5l-10 10" /></I>
        </WinControls>
      </TitleBar>
      <MenuBar>
        <GateIcon />
        <MenuItems>
          {menus.map(([a, b, c, w]) => <MenuItem key={b + c} $w={w} $ls={-0.3}>{a}<u>{b}</u>{c}</MenuItem>)}
        </MenuItems>
        <ChildControls>
          <I w={18} h={14}><path d="M5 9.500h6" stroke="#4c607a" /></I>
          <I w={18} h={14}><path d="M5.500 5.500h6v5h-6zM7.500 5v-2h6v5h-2" stroke="#4c607a" /></I>
          <I w={17} h={14} smooth><path d="M5 4l6 6M11 4l-6 6" stroke="#4c607a" strokeWidth="1.500" /></I>
        </ChildControls>
      </MenuBar>
      <Toolbar $w={2560}>
        <Buttons items={[NewI, OpenI, SaveI, PrintI]} />
        <Buttons pad={2} on={7} items={[CutI, CopyI, PasteI, BookI, HelpI, LensI, LensQI, ArrowI, PenI, AI, PlusI, BoldPlusI]} />
        <Buttons pad={2} items={scenes} />
        <Buttons pad={2} on={1} items={[ChipI, BooksI, NetI]} />
        <ToolbarEnd $m="-3px 0 0 -2px" />
      </Toolbar>
      <Toolbar $w={887}>
        <Buttons on={0} items={[WaveI, PlugI, GunI, BitsI, QWaveI, ZapI, UndoI, BootI]} />
        <Buttons items={[DiamondI, CrossI, EqI]} />
        <Buttons items={[StopI, Walking, Stepping]} />
        <Slider>
          <Track />
          <I w={12} h={21}><path d="M.5 16V.5h10" stroke="#fff" /><path d="M10.500 0v16l-4 4h-2" stroke="#696969" /><path d="M.5 16l4 4" stroke="#fff" /></I>
        </Slider>
        <Group><ToolButton $pad={3}><RunI /></ToolButton></Group>
        <TimeField>227 ns</TimeField>
        <ToolbarEnd $m="-3px 0 0 -2px" />
      </Toolbar>
      <Rule />
      <Main>
        <Mdi>
          <Raised><Sunken><SunkenInner>
            <Schematic />
            <VBar><Chevron d="up" /><VThumb $h={223} $t={311} /><Chevron d="down" /></VBar>
            <HBar><Chevron d="left" /><HThumb $w={1815} $l={263} /><Chevron d="right" /></HBar>
            <div />
          </SunkenInner></Sunken></Raised>
          <DocTab><GateIcon /><DocTitle $s={13} $ls={-0.1}>C:₩Users₩gusfo625...</DocTitle></DocTab>
        </Mdi>
        <Dock>
          <DockBody>
            <DockHead>
              <Grip />
              <TinyButton><I w={7} h={4}><path d="M0 0h7L3.500 4z" fill="#a0a0a0" stroke="none" /></I></TinyButton>
              <TinyButton><XMark /></TinyButton>
            </DockHead>
            <DockPane>
              <Combo><ComboText>Simulation IO.clf</ComboText><ComboButton><I w={7} h={4}><path d="M0 0h7L3.500 4z" fill="#000" stroke="none" /></I></ComboButton></Combo>
              <Preview><I w={27} h={41}><path d="M.5.5h25v25H.5zM2.500 2.500h20v20h-20zM13.500 25v15" /></I></Preview>
              <CheckRow><Check><I w={8} h={8}><path d="M.5 3l2.500 3 4-5" strokeWidth="2" /></I></Check>Preview</CheckRow>
              <FilterRow>Filter:<FilterInput /></FilterRow>
              <List>{parts.map((p, i) => <ListItem key={p} $ls={spacing(p)} $sel={i === 15}>{p}</ListItem>)}</List>
            </DockPane>
          </DockBody>
          <DockEdge />
        </Dock>
      </Main>
      <Timing>
        <TimingTop />
        <TimingRow>
          <Side>
            <TinyButton><XMark /></TinyButton>
            <TinyButton><I w={4} h={7}><path d="M0 0v7l4-3.500z" fill="#a0a0a0" stroke="none" /></I></TinyButton>
            <SideGrip />
          </Side>
          <TimingFrame><TimingInner>
            <TimingPanes>
              <Names>
                <Unit>ns</Unit>
                {['J', 'E', 'K', '/Q', 'Q'].map((n, i) => <Name key={n} $sel={i === 0}>{n}</Name>)}
              </Names>
              <Splitter />
              <Waves><WaveChart /></Waves>
              <VBar><Chevron d="up" /><VThumb $h={17} $t={5} /><Chevron d="down" /></VBar>
            </TimingPanes>
            <TabsRow>
              <NavButton><Tri d="l" bar /></NavButton><NavButton><Tri d="l" /></NavButton>
              <NavButton><Tri d="r" /></NavButton><NavButton><Tri d="r" bar /></NavButton>
              <ActiveTab>
                <I smooth w={6} h={18}><path d="M0 0H6V18z" fill="#fff" stroke="none" /><path d="M.5 0L5.500 17" strokeWidth="1.300" /></I>
                <TabLabel>Timing</TabLabel>
                <I smooth w={6} h={18}><path d="M0 0H6L0 18z" fill="#fff" stroke="none" /><path d="M5.500 0L.5 17" strokeWidth="1.300" /></I>
              </ActiveTab>
              <TabLine />
            </TabsRow>
          </TimingInner></TimingFrame>
        </TimingRow>
      </Timing>
      <Status>
        <StatusText $ls={-0.2}>Ready</StatusText>
        <Cell $w={28} /><Cell $w={33}>NUM</Cell><Cell $w={34} />
      </Status>
      <Taskbar>
        <Launch $w={62} $l={16}><WinLogo /></Launch>
        <Launch $w={42} $l={0}><GLogo /></Launch>
        <Task $l={6} $g={4}><Chrome /><T $ls={-0.3}>Binary probe signal...</T></Task>
        <Task $l={7} $g={5}><HwpBox>호</HwpBox><T $ls={0.4}>13-9 논리회로 과...</T></Task>
        <Task $l={9} $g={10}><Folder /><T $s={12.5} $ls={0.5}>논리회로 실습</T></Task>
        <Task $l={9} $g={9} $w={151} $mr={5}><Folder /><T $ls={-0.05}>LogicWorks 5(논리...</T></Task>
        <Task $l={10} $g={4} $w={159} $mr={5} $on><LwIcon /><T $ls={-0.05}>LogicWorks 5 - [C:...</T></Task>
        <Task $l={7} $g={0} $w={13} $mr={0}><I w={6} h={22}><path d="M0 0h6v22H0z" fill="#1a4fa0" stroke="none" /><path d="M0 0h6v6l-6 8z" fill="#2aa8f0" stroke="none" /></I></Task>
        <Sheet>
          <SheetTop><SheetHead /><SheetCorner /></SheetTop>
          <SheetBar>
            <SheetNav>
              <I w={145} h={28}>
                <path d="M17.500 7.500h10v11h-10z" stroke="#666" /><path d="M17 16h5v4h-5z" fill="#666" stroke="none" />
                <path d="M38.500 5v18" stroke="#ccc" />
                <g stroke="#c4c4c4" shapeRendering="auto" strokeWidth="1.300">
                  <path d="M51.500 8v11M59 9l-4.500 4.500L59 18M81 9l-4.500 4.500L81 18M101 9l4.500 4.500L101 18M124 9l4.500 4.500L124 18M131.500 8v11" />
                </g>
              </I>
            </SheetNav>
            <SheetTab>13-9 논리회로 과제</SheetTab>
            <SheetAdd><I w={11} h={11}><path d="M5.500 0v11M0 5.500h11" stroke="#666" /></I></SheetAdd>
            <SheetSplit />
            <SheetScroll><Chevron d="left" c="#777" s={1.5} /><SheetThumb /><Chevron d="right" c="#777" s={1.5} /></SheetScroll>
            <SheetGrab><I w={1} h={11}><path d="M.5 0v11" stroke="#555" /></I></SheetGrab>
          </SheetBar>
          <SheetFoot />
        </Sheet>
        <Tray>
          <TrayItem $w={21}><I smooth w={15} h={14}><path d="M0 6Q6-1 11 3V9Q5 11 0 6z" fill="#76b900" stroke="none" /><circle cx="5.500" cy="6" r="2" stroke="#1c1c1c" /><circle cx="10" cy="9" r="4" fill="#1c1c1c" stroke="#fff" /><circle cx="10" cy="9" r="1.700" fill="#fff" stroke="none" /></I></TrayItem>
          <TrayItem $w={26}><GLogo s={17} /></TrayItem>
          <TrayItem $w={23}><Ime $bg="#c4c4c4" $c="#555">한</Ime></TrayItem>
          <TrayItem $w={24}><I smooth w={16} h={16}><path d="M0 0h16v16H0z" fill="#ffe000" stroke="none" /><ellipse cx="8" cy="7.300" rx="6" ry="4.700" fill="#3c1e1e" stroke="none" /><path d="M5 10v4l4-3z" fill="#3c1e1e" stroke="none" /></I></TrayItem>
          <TrayItem $w={24}><I w={17} h={14}><path d="M5 2.500h11.500v8H5M8 13.500h6M10.500 11v3M.5.5h4v4h-4zM2.500 5v7h3" stroke="#fff" /></I></TrayItem>
          <TrayItem $w={25}><I smooth w={17} h={14}><path d="M.5 4.500H3l4-3.500v12L3 9.500H.5z" stroke="#fff" /><path d="M9 5q1.500 2 0 4" stroke="#fff" /><path d="M11 3q3 4 0 8M13.500 1q4 6 0 12" stroke="#888" /></I></TrayItem>
          <TrayItem $w={28}><Letter>A</Letter></TrayItem>
          <TrayItem $w={23}><Ime $bg="#fff" $c="#000">한</Ime></TrayItem>
          <Clock>오전 12:49<br />2023-05-08</Clock>
          <TrayItem $w={26}><I w={28} h={17}><path d="M10.500 1.500h15v11h-5l-3 3v-3h-7z" stroke="#fff" /></I></TrayItem>
          <ShowDesktop />
        </Tray>
      </Taskbar>
    </Screen>
  );
}
